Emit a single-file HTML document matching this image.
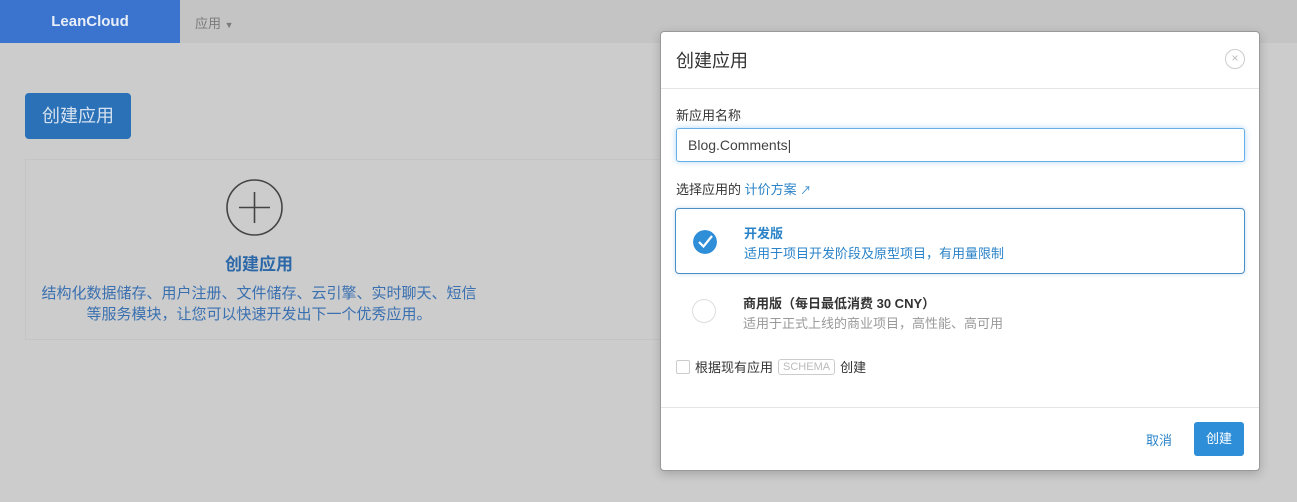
<!DOCTYPE html>
<html><head><meta charset="utf-8"><style>
*{box-sizing:border-box;margin:0;padding:0}
body{width:1297px;height:502px;overflow:hidden;background:#cccccc;font-family:"Liberation Sans","Noto Sans CJK SC",sans-serif;position:relative}
.nav{position:absolute;left:0;top:0;width:1297px;height:43px;background:#c4c4c4}
.logo{position:absolute;left:0;top:0;width:180px;height:43px;background:#3b74cf;color:#e8eef8;font-weight:bold;font-size:15px;text-align:center;line-height:43px}
.navapp{position:absolute;left:195px;top:13px;font-size:13px;color:#7a7a7a}
.btn1{position:absolute;left:25px;top:93px;width:106px;height:46px;background:#2a71b8;border-radius:4px;color:#d6e2ef;font-size:18px;text-align:center;line-height:46px}
.card{position:absolute;left:25px;top:159px;width:700px;height:181px;border:1px solid #c4c4c4;border-right:none}
.plus{position:absolute;left:226px;top:179px}
.ctitle{position:absolute;left:0;width:518px;top:250px;text-align:center;font-size:17px;font-weight:bold;color:#2c68a8}
.cdesc{position:absolute;left:20px;width:478px;top:283px;text-align:center;font-size:15px;line-height:21px;color:#3a70b0}
.modal{position:absolute;left:660px;top:31px;width:600px;height:440px;background:#fff;border:1px solid #999;border-radius:4px;box-shadow:0 3px 10px rgba(0,0,0,.2)}
.mh{height:57px;border-bottom:1px solid #e5e5e5;font-size:18px;color:#333;padding:15px 15px}
.close{position:absolute;right:14px;top:17px;width:20px;height:20px;border:1px solid #ccc;border-radius:50%;color:#bbb;font-size:12px;text-align:center;line-height:17px}
.lbl{position:absolute;left:15px;font-size:13px;color:#333}
.inp{position:absolute;left:15px;top:96px;width:569px;height:34px;border:1px solid #66afe9;border-radius:3px;box-shadow:0 0 6px rgba(102,175,233,.5);font-size:14px;color:#444;padding:8px 11px}
.opt{position:absolute;left:14px;width:570px;height:66px;border-radius:4px}
.opt.sel{border:1px solid #4a90c8;box-shadow:0 0 4px rgba(74,144,200,.3)}
.opt .t{position:absolute;left:68px;font-size:13px;font-weight:bold}
.opt .d{position:absolute;left:68px;font-size:13px}
.radio{position:absolute;left:17px;top:21px;width:24px;height:24px;border-radius:50%}
.mf{position:absolute;left:0;top:375px;width:598px;border-top:1px solid #e5e5e5}
.cancel{position:absolute;left:485px;top:398px;font-size:13px;color:#2a83c8}
.ok{position:absolute;left:533px;top:390px;width:50px;height:34px;background:#2f8ed8;border-radius:3px;color:#fff;font-size:13px;text-align:center;line-height:34px}
</style></head><body>
<div class="nav"><div class="logo">LeanCloud</div><div class="navapp">应用 <span style="font-size:9px">▼</span></div></div>
<div class="btn1">创建应用</div>
<div class="card"></div>
<svg class="plus" width="57" height="57" viewBox="0 0 57 57"><circle cx="28.5" cy="28.5" r="27.5" fill="none" stroke="#444" stroke-width="1.6"/><path d="M28.5 13V44M13 28.5H44" stroke="#444" stroke-width="1.6"/></svg>
<div class="ctitle">创建应用</div>
<div class="cdesc">结构化数据储存、用户注册、文件储存、云引擎、实时聊天、短信<br>等服务模块，让您可以快速开发出下一个优秀应用。</div>
<div class="modal">
<div class="mh">创建应用</div><div class="close">×</div>
<div class="lbl" style="top:73px">新应用名称</div>
<div class="inp">Blog.Comments|</div>
<div class="lbl" style="top:147px">选择应用的 <span style="color:#2a83c8">计价方案 <span style="font-size:11px">↗</span></span></div>
<div class="opt sel" style="top:176px">
<svg class="radio" viewBox="0 0 24 24"><circle cx="12" cy="12" r="12" fill="#2f8ed8"/><path d="M6 12l4.5 4.5L19 6" stroke="#fff" stroke-width="2.2" fill="none"/></svg>
<div class="t" style="color:#2a83c8;top:14px">开发版</div><div class="d" style="color:#2a83c8;top:34px">适用于项目开发阶段及原型项目，有用量限制</div></div>
<div class="opt" style="top:246px">
<div class="radio" style="border:1px solid #ddd"></div>
<div class="t" style="color:#333;top:15px">商用版（每日最低消费 30 CNY）</div><div class="d" style="color:#999;top:35px">适用于正式上线的商业项目，高性能、高可用</div></div>
<div class="lbl" style="top:325px;display:flex;align-items:center;gap:5px"><span style="display:inline-block;width:14px;height:14px;border:1px solid #ccc;border-radius:2px"></span>根据现有应用 <span style="border:1px solid #ccc;border-radius:3px;color:#bbb;font-size:11px;padding:1px 4px">SCHEMA</span> 创建</div>
<div class="mf"></div>
<div class="cancel">取消</div><div class="ok">创建</div>
</div>
</body></html>
